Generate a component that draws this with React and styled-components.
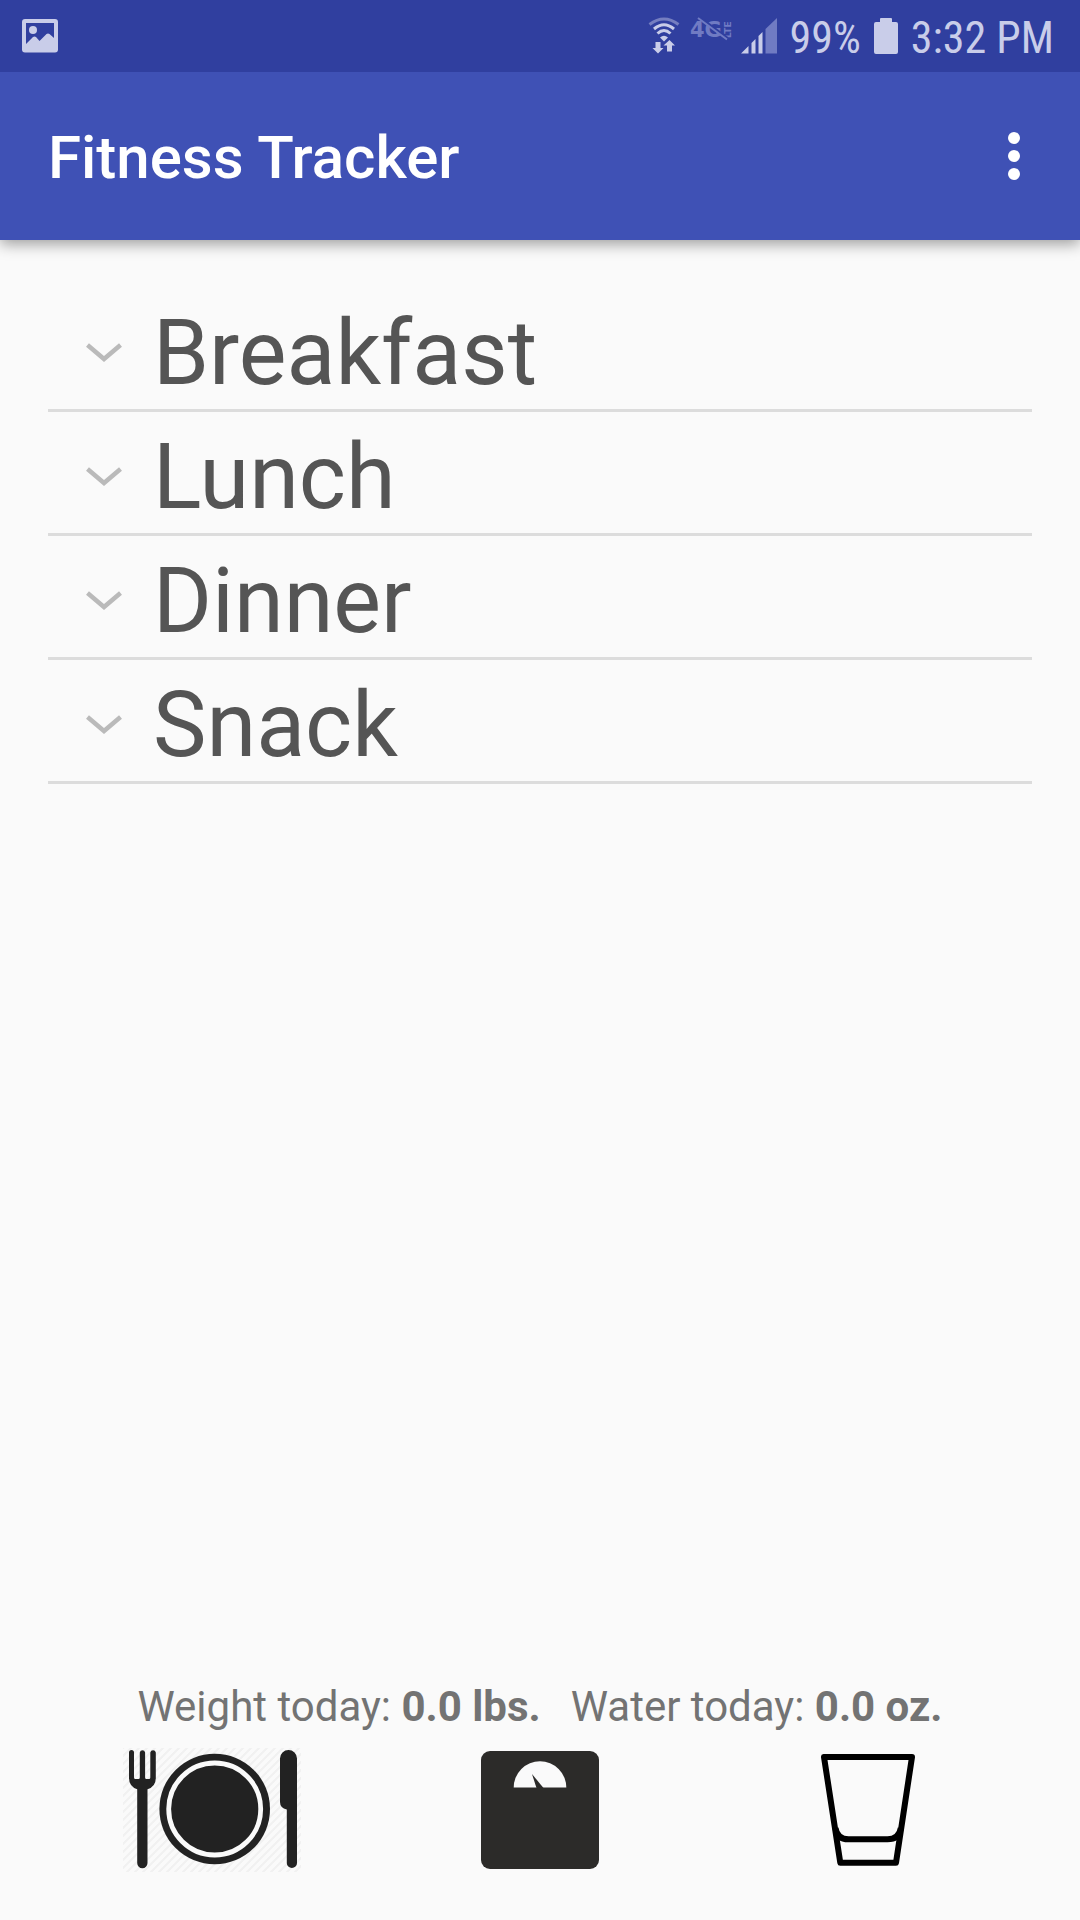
import React, { useState } from "react";
import styled, { createGlobalStyle } from "styled-components";

const GlobalStyle = createGlobalStyle`
  *, *::before, *::after { box-sizing: border-box; }
  body { margin: 0; background: #fafafa; font-family: Roboto, "Noto Sans", sans-serif; }
  button { font: inherit; color: inherit; border: 0; padding: 0; background: none; cursor: pointer; }
  svg { display: block; flex: none; }
`;

const Screen = styled.div`
  display: flex;
  flex-direction: column;
  min-height: 100vh;
  background: #fafafa;
`;

const StatusBar = styled.div`
  position: relative;
  z-index: 1;
  display: flex;
  align-items: center;
  justify-content: space-between;
  height: 72px;
  padding: 0 26px 0 22px;
  background: #303f9f;
  color: #c9cde9;
`;

const StatusGroup = styled.div`
  display: flex;
  align-items: center;
  gap: ${(p) => p.$gap}px;
`;

const StatusText = styled.span`
  padding-top: 4px;
  font-family: "Roboto Condensed", "Liberation Sans Narrow", Roboto, sans-serif;
  font-size: 44px;
  line-height: 56px;
  white-space: nowrap;
`;

const AppBar = styled.header`
  display: flex;
  align-items: center;
  justify-content: space-between;
  height: 168px;
  padding: 0 36px 0 48px;
  background: #3f51b5;
  color: #fff;
  box-shadow: 0 4px 14px rgba(0, 0, 0, 0.38);
`;

const Title = styled.h1`
  margin: 0;
  padding-top: 4px;
  font-size: 60px;
  line-height: 72px;
  font-weight: 500;
`;

const MenuButton = styled.button`
  display: grid;
  place-items: center;
  width: 60px;
  height: 96px;
`;

const Main = styled.main`
  display: flex;
  flex: 1;
  flex-direction: column;
  justify-content: space-between;
  padding: 48px;
`;

const MealList = styled.ul`
  margin: 0;
  padding: 0;
  list-style: none;
`;

const MealItem = styled.li`
  border-bottom: 3px solid #dcdcdc;
`;

const MealButton = styled.button`
  display: flex;
  align-items: center;
  gap: 30px;
  width: 100%;
  padding: 10px 0 0 37px;
  text-align: left;
`;

const MealName = styled.span`
  font-size: 90px;
  line-height: 111px;
  color: #555;
`;

const Totals = styled.div`
  display: flex;
  justify-content: center;
  gap: 30px;
  font-size: 42px;
  line-height: 54px;
  color: #737373;
`;

const Total = styled.p`
  margin: 0;
  white-space: nowrap;
`;

const Actions = styled.nav`
  display: grid;
  grid-template-columns: repeat(3, 1fr);
  justify-items: center;
  padding-top: 14px;
`;

const ActionButton = styled.button`
  display: block;
`;

function PictureIcon() {
  return (
    <svg width="36" height="36" viewBox="0 0 36 36" aria-hidden="true">
      <path
        fill="currentColor"
        fillRule="evenodd"
        d="M3 1h30a3 3 0 0 1 3 3v27.500a3 3 0 0 1-3 3H3a3 3 0 0 1-3-3V4a3 3 0 0 1 3-3zM4 5v21l7-7q1.500-1 3 0l3.500 4 7-7q1.500-1.200 3 0L32 20V5z"
      />
      <circle cx="11" cy="12" r="4" fill="currentColor" />
    </svg>
  );
}

function WifiIcon() {
  return (
    <svg width="34" height="40" viewBox="0 0 34 40" aria-hidden="true">
      <g fill="none" stroke="currentColor" strokeWidth="3">
        <path d="M2.500 8.500q14.500-11 29 0" opacity="0.45" />
        <path d="M7 13q10-8.500 20 0" />
        <path d="M10.500 17.500q6.500-6 13 0" />
      </g>
      <path fill="currentColor" d="M13 21.500q4-3.500 8 0l-4 4z" />
      <path fill="currentColor" d="M8.500 26h5v6h3L11 37.500 5.500 32h3z" />
      <path fill="currentColor" d="M20 35.500v-6h-3.500L22.500 24l5.500 5.500h-3v6z" />
    </svg>
  );
}

function LteIcon() {
  return (
    <svg width="44" height="40" viewBox="0 0 44 40" role="img" aria-label="4G LTE off">
      <g fill="#707bc3" fontFamily="DejaVu Sans, sans-serif" fontWeight="700">
        <text x="1" y="21" fontSize="21">4G</text>
        <text x="42" y="22" fontSize="9" transform="rotate(-90 42 22)">LTE</text>
      </g>
      <path d="M10.500 1.500l28 21" stroke="#303f9f" strokeWidth="3" />
      <path d="M9 2l29 21.500" stroke="#707bc3" strokeWidth="2" />
    </svg>
  );
}

function SignalIcon() {
  return (
    <svg width="36" height="36" viewBox="0 0 36 36" aria-hidden="true">
      <path fill="currentColor" d="M0 35.500L7.500 28v7.500zM10.500 25l4-4v14.500h-4zM17.500 18l4-4v21.500h-4z" />
      <path fill="#707bc3" d="M24.500 11L36 0v35.500H24.500z" />
    </svg>
  );
}

function BatteryIcon() {
  return (
    <svg width="24" height="36" viewBox="0 0 24 36" aria-hidden="true">
      <path
        fill="currentColor"
        d="M7 0h10q1 0 1 1v3h4q2 0 2 2v28q0 2-2 2H2q-2 0-2-2V6q0-2 2-2h4V1q0-1 1-1z"
      />
    </svg>
  );
}

function MoreIcon() {
  return (
    <svg width="12" height="48" viewBox="0 0 12 48" fill="currentColor" aria-hidden="true">
      <circle cx="6" cy="6" r="6" />
      <circle cx="6" cy="24" r="6" />
      <circle cx="6" cy="42" r="6" />
    </svg>
  );
}

function Chevron({ open }) {
  return (
    <svg width="38" height="24" viewBox="0 0 38 24" aria-hidden="true">
      <path
        d={open ? "M2.500 18L19 4.500 35.500 18" : "M2.500 3L19 17 35.500 3"}
        fill="none"
        stroke="#bababa"
        strokeWidth="4.500"
      />
    </svg>
  );
}

function MealIcon() {
  return (
    <svg width="178" height="124" viewBox="0 0 178 124" aria-hidden="true">
      <defs>
        <pattern id="hatch" width="8" height="8" patternUnits="userSpaceOnUse">
          <path d="M-2 2l4-4M0 8l8-8M6 10l4-4" stroke="#f1f1f1" strokeWidth="2" />
        </pattern>
      </defs>
      <rect width="178" height="124" fill="url(#hatch)" />
      <g fill="#222">
        <path d="M6 4.500a2.500 2.500 0 0 1 5 0V29.500q0 1.500 1.500 1.500h3q1.300 0 1.300-1.500V4.500a2.700 2.700 0 0 1 5.300 0V29.500q0 1.500 1.400 1.500h2.500q1.300 0 1.300-1.500V4.500a2.800 2.800 0 0 1 5.500 0V30q0 8.500-8.300 11.300V115a5.100 5.100 0 0 1-10.300 0V41.300Q6 38.500 6 30z" />
        <circle cx="91.700" cy="61" r="55.300" />
        <path d="M157 10.500a8.500 8.500 0 0 1 17 0V115a5.100 5.100 0 0 1-10.200 0V61.500Q157 60 157 54z" />
      </g>
      <circle cx="91.700" cy="61" r="46" fill="none" stroke="#fafafa" strokeWidth="4.800" />
    </svg>
  );
}

function ScaleIcon() {
  return (
    <svg width="124" height="124" viewBox="0 0 124 124" aria-hidden="true">
      <rect x="3" y="3" width="118" height="118" rx="9" fill="#2c2b29" />
      <path d="M35.700 39.500a26.300 26.300 0 0 1 52.600 0z" fill="#fafafa" />
      <path d="M54 26l11.500 14h-7z" fill="#2c2b29" />
    </svg>
  );
}

function GlassIcon() {
  return (
    <svg width="124" height="124" viewBox="0 0 124 124" aria-hidden="true">
      <g fill="none" stroke="#000" strokeWidth="6" strokeLinejoin="round">
        <path d="M18 9h88L90 114.700H34.300z" />
        <path d="M29.500 80q1.500 11.300 13 11.300h39q11.500 0 13.300-11.300" />
      </g>
    </svg>
  );
}

const MEALS = ["Breakfast", "Lunch", "Dinner", "Snack"];

const ACTIONS = [
  { label: "Log a meal", Icon: MealIcon },
  { label: "Log weight", Icon: ScaleIcon },
  { label: "Log water", Icon: GlassIcon },
];

export default function App() {
  const [openMeal, setOpenMeal] = useState(null);

  return (
    <Screen>
      <GlobalStyle />
      <StatusBar>
        <PictureIcon />
        <StatusGroup $gap={13}>
          <StatusGroup $gap={8}>
            <WifiIcon />
            <LteIcon />
            <SignalIcon />
          </StatusGroup>
          <StatusText>99%</StatusText>
          <BatteryIcon />
          <StatusText>3:32 PM</StatusText>
        </StatusGroup>
      </StatusBar>
      <AppBar>
        <Title>Fitness Tracker</Title>
        <MenuButton type="button" aria-label="More options">
          <MoreIcon />
        </MenuButton>
      </AppBar>
      <Main>
        <MealList>
          {MEALS.map((meal) => (
            <MealItem key={meal}>
              <MealButton
                type="button"
                aria-expanded={openMeal === meal}
                onClick={() => setOpenMeal(openMeal === meal ? null : meal)}
              >
                <Chevron open={openMeal === meal} />
                <MealName>{meal}</MealName>
              </MealButton>
            </MealItem>
          ))}
        </MealList>
        <footer>
          <Totals>
            <Total>
              Weight today: <b>0.0 lbs.</b>
            </Total>
            <Total>
              Water today: <b>0.0 oz.</b>
            </Total>
          </Totals>
          <Actions aria-label="Log entries">
            {ACTIONS.map(({ label, Icon }) => (
              <ActionButton key={label} type="button" aria-label={label}>
                <Icon />
              </ActionButton>
            ))}
          </Actions>
        </footer>
      </Main>
    </Screen>
  );
}
